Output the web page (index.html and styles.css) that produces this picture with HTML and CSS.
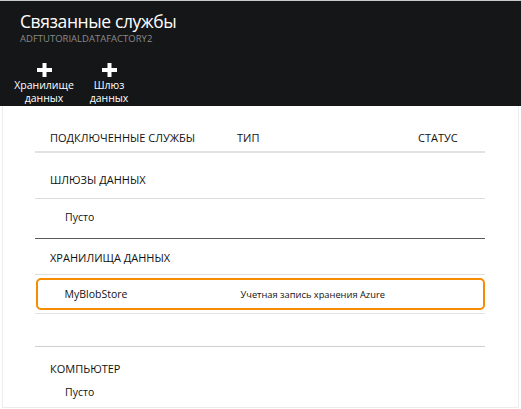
FILE: index.html
```html
<!DOCTYPE html>
<html lang="ru">
<head>
<meta charset="utf-8">
<link rel="stylesheet" href="styles.css">
</head>
<body>
<div class="blade">
  <header class="hdr">
    <h1 class="title">Связанные службы</h1>
    <div class="subtitle">ADFTUTORIALDATAFACTORY2</div>
    <div class="cmds">
      <div class="cmd">
        <svg class="plus" width="15" height="14" viewBox="0 0 15 14"><rect x="5.5" y="0" width="4" height="14" fill="#fff"/><rect x="0" y="5" width="15" height="4" fill="#fff"/></svg>
        <span>Хранилище<br>данных</span>
      </div>
      <div class="cmd">
        <svg class="plus" width="15" height="14" viewBox="0 0 15 14"><rect x="5.5" y="0" width="4" height="14" fill="#fff"/><rect x="0" y="5" width="15" height="4" fill="#fff"/></svg>
        <span>Шлюз<br>данных</span>
      </div>
    </div>
  </header>
  <main class="content">
    <div class="table">
      <div class="row head caps">
        <span class="c1">ПОДКЛЮЧЕННЫЕ СЛУЖБЫ</span>
        <span class="c2">ТИП</span>
        <span class="c3">СТАТУС</span>
      </div>
      <div class="row section caps s-gw">ШЛЮЗЫ ДАННЫХ</div>
      <div class="row item i-empty">Пусто</div>
      <div class="row section caps s-store">ХРАНИЛИЩА ДАННЫХ</div>
      <div class="row selected">
        <span class="c1">MyBlobStore</span>
        <span class="c2 type">Учетная запись хранения Azure</span>
      </div>
      <div class="row spacer"></div>
      <div class="row section caps s-comp">КОМПЬЮТЕР</div>
      <div class="row item i-last">Пусто</div>
    </div>
  </main>
</div>
</body>
</html>
```
FILE: styles.css
```css
* { box-sizing: border-box; }
html, body { margin: 0; padding: 0; background: #fff; }
body {
  width: 521px;
  height: 409px;
  overflow: hidden;
  font-family: "Open Sans", "Noto Sans", sans-serif;
  color: #111;
}
.blade { display: flex; flex-direction: column; height: 409px; }
.hdr {
  background: #151618;
  border-top: 1px solid #c8c8c8;
  height: 106px;
  padding: 0 0 0 20px;
  color: #fff;
}
.title {
  margin: 0;
  font-weight: 400;
  font-size: 17.5px;
  line-height: 21px;
  padding-top: 10px;
  letter-spacing: -0.4px;
}
.subtitle {
  font-size: 9.5px;
  line-height: 12px;
  color: #8a8a8a;
  margin-top: 1px;
}
.cmds { display: flex; margin-top: 18px; margin-left: -7px; gap: 3px; }
.cmd {
  width: 62px;
  display: flex;
  flex-direction: column;
  align-items: center;
  font-size: 10.5px;
  line-height: 12.5px;
  text-align: center;
}
.cmd .plus { display: block; }
.cmd span { margin-top: 2px; }
.content {
  flex: 1;
  margin: 0 2px 1px 2px;
  border: 1px solid #ececec;
  border-top: none;
  padding: 18px 33px 0 32px;
}
.table { font-size: 10.5px; }
.caps { font-size: 11px; }
.row { display: flex; align-items: center; }
.c1 { width: 202px; padding-left: 15px; flex: none; }
.c2 { width: 181px; flex: none; }
.c3 { padding-left: 0; }
.head { height: 29px; border-bottom: 2px solid #e2e2e2; padding-bottom: 1px; }
.section { padding-left: 15px; }
.s-gw { height: 46px; border-bottom: 1px solid #dcdcdc; padding-top: 8px; }
.item { padding-left: 30px; }
.i-empty { height: 40px; border-bottom: 1px solid #5a5a5a; padding-bottom: 3px; }
.s-store { height: 36px; border-bottom: 1px solid #dedede; padding-top: 2px; }
.selected {
  margin-top: 3px;
  height: 32px;
  border: 2.5px solid #f88c00;
  border-radius: 5px;
  margin-left: 1px;
}
.selected .c1 { padding-left: 26.5px; width: 202.5px; }
.type { font-size: 9.3px; }
.spacer { height: 34px; border-top: 1px solid #e2e2e2; border-bottom: 1px solid #cfcfcf; margin-top: 3px; }
.s-comp { height: 42px; padding-top: 0; }
.i-last { height: 5px; }
```
